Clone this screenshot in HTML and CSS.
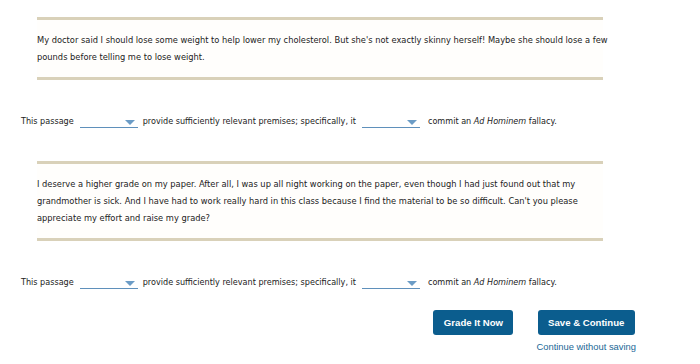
FILE: index.html
```html
<!DOCTYPE html>
<html lang="en">
<head>
<meta charset="utf-8">
<title>Ad Hominem</title>
<link rel="stylesheet" href="styles.css">
</head>
<body>
<div class="page">
  <div class="passage">
    <p>My doctor said I should lose some weight to help lower my cholesterol. But she's not exactly skinny herself! Maybe she should lose a few pounds before telling me to lose weight.</p>
  </div>
  <div class="sentence">
    <span>This passage</span>
    <span class="select"><span class="arrow"></span></span>
    <span>provide sufficiently relevant premises; specifically, it</span>
    <span class="select select-two"><span class="arrow"></span></span>
    <span>commit an <em>Ad Hominem</em> fallacy.</span>
  </div>
  <div class="passage passage-two">
    <p>I deserve a higher grade on my paper. After all, I was up all night working on the paper, even though I had just found out that my grandmother is sick. And I have had to work really hard in this class because I find the material to be so difficult. Can't you please appreciate my effort and raise my grade?</p>
  </div>
  <div class="sentence">
    <span>This passage</span>
    <span class="select"><span class="arrow"></span></span>
    <span>provide sufficiently relevant premises; specifically, it</span>
    <span class="select select-two"><span class="arrow"></span></span>
    <span>commit an <em>Ad Hominem</em> fallacy.</span>
  </div>
  <div class="actions">
    <button class="btn btn-grade" type="button">Grade It Now</button>
    <div class="save-group">
      <button class="btn btn-save" type="button">Save &amp; Continue</button>
      <a class="link" href="#">Continue without saving</a>
    </div>
  </div>
</div>
</body>
</html>
```
FILE: styles.css
```css
html, body {
  margin: 0;
  padding: 0;
  background: #ffffff;
}
.page {
  font-family: "DejaVu Sans", Verdana, sans-serif;
  font-size: 8.3px;
  color: #222222;
  padding-top: 17px;
}
.passage {
  margin: 0 97px 0 37px;
  border-top: 3px solid #d9d1b9;
  border-bottom: 3px solid #d9d1b9;
  background: #fffefc;
  padding: 12px 0 11px 0;
}
.passage p {
  margin: 0 -8px 0 0;
  line-height: 17px;
}
.passage-two {
  margin-top: 30px;
}
.sentence {
  display: flex;
  align-items: center;
  height: 20px;
  margin: 31px 0 0 21px;
  font-size: 8.1px;
  white-space: nowrap;
}
.sentence em {
  font-style: italic;
}
.select {
  position: relative;
  display: inline-block;
  width: 58px;
  height: 13px;
  border-bottom: 1px solid #5f90bb;
  margin: 0 5px 0 6px;
}
.select-two {
  margin: 0 8px 0 6px;
}
.select .arrow {
  position: absolute;
  right: 3px;
  top: 6px;
  width: 0;
  height: 0;
  border-left: 5px solid transparent;
  border-right: 5px solid transparent;
  border-top: 5px solid #6b9cc6;
}
.actions {
  display: flex;
  justify-content: flex-end;
  align-items: flex-start;
  gap: 23px;
  margin-top: 18px;
  padding-right: 64px;
}
.save-group {
  display: flex;
  flex-direction: column;
  align-items: center;
}
.btn {
  font-family: "Liberation Sans", Arial, sans-serif;
  font-weight: bold;
  font-size: 9.6px;
  color: #ffffff;
  background: #0b5d8e;
  border: none;
  border-radius: 3px;
  height: 25px;
  padding: 0;
  cursor: pointer;
}
.btn-grade {
  width: 80px;
}
.btn-save {
  width: 97px;
}
.link {
  font-family: "Liberation Sans", Arial, sans-serif;
  font-size: 9.4px;
  color: #1a6796;
  text-decoration: none;
  margin-top: 6px;
}
```
